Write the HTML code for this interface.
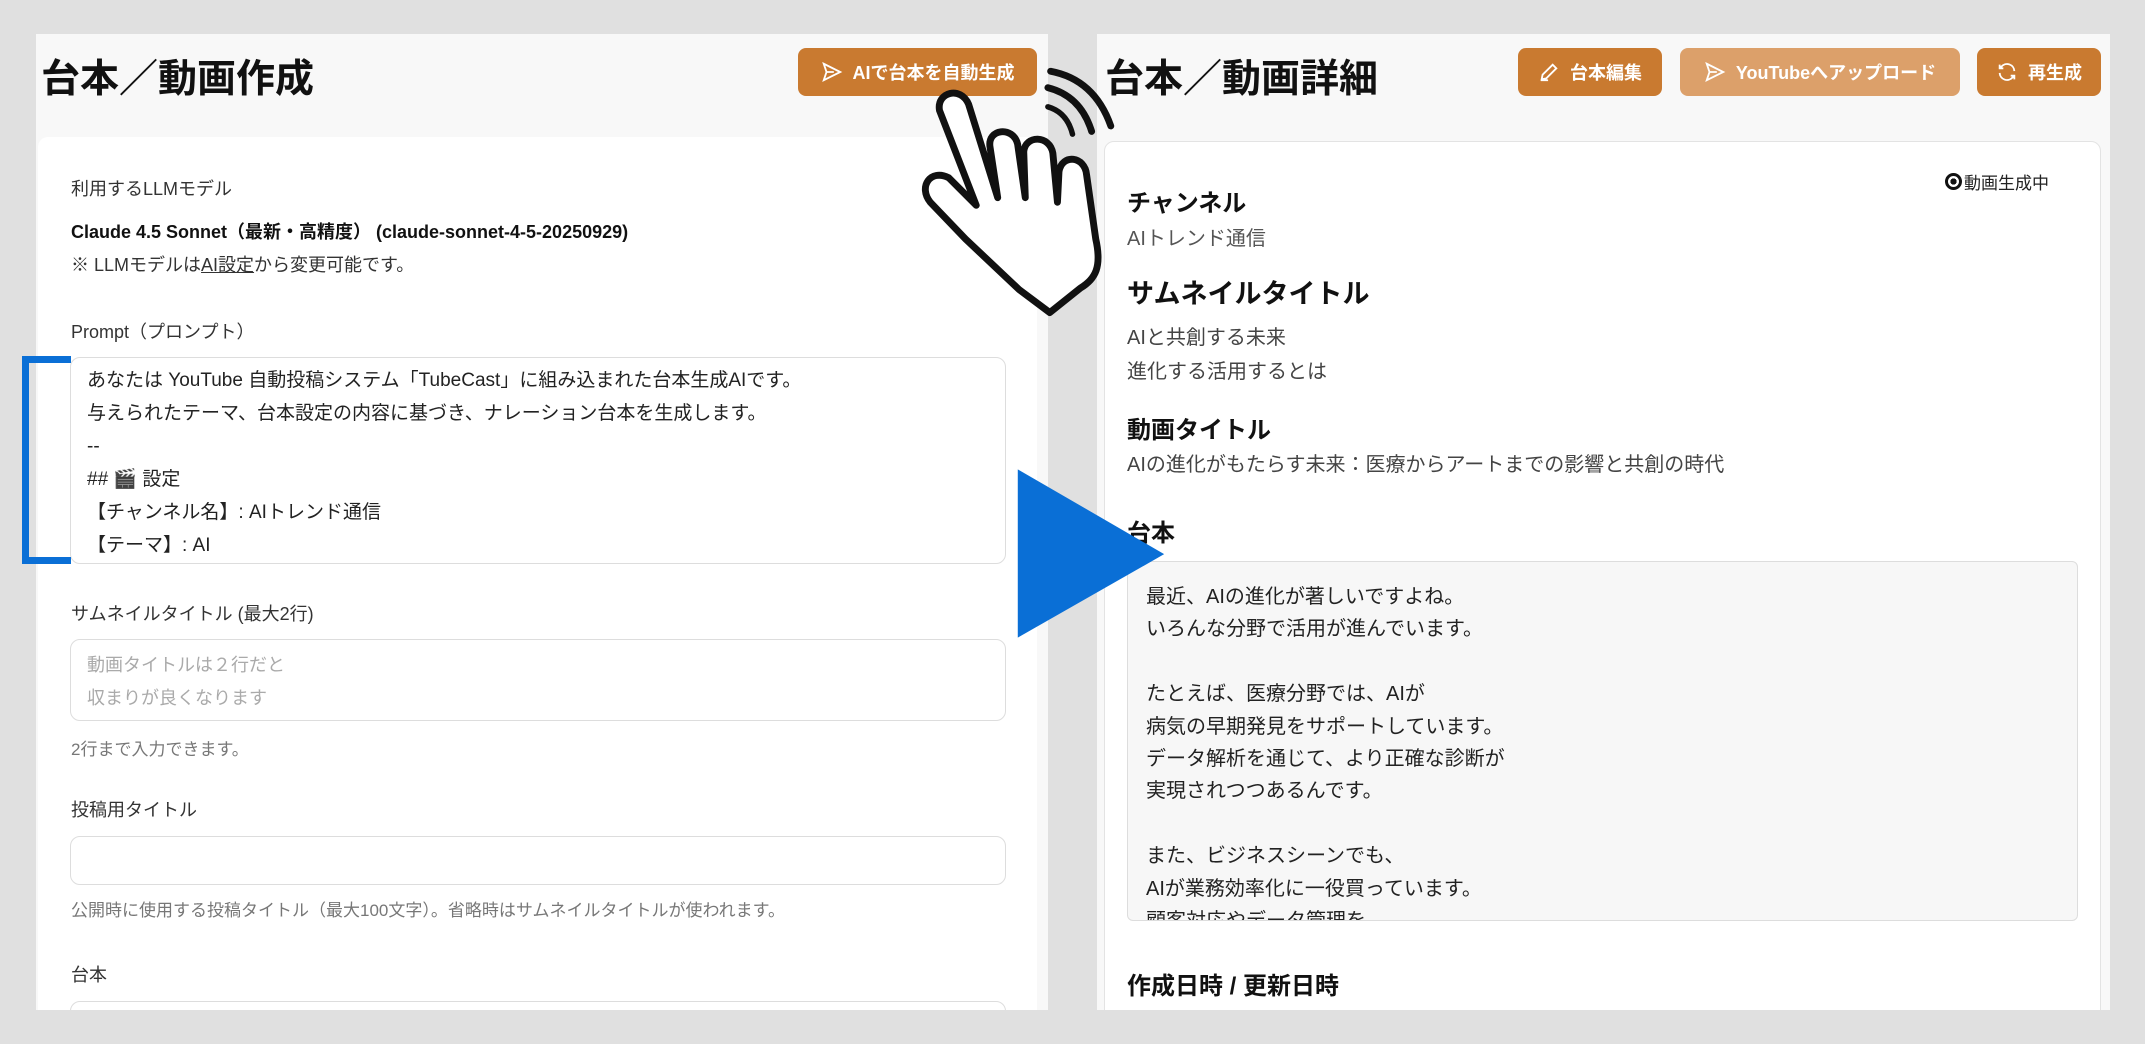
<!DOCTYPE html>
<html><head><meta charset="utf-8">
<style>
*{box-sizing:border-box;margin:0;padding:0}
body{width:2145px;height:1044px;background:#e0e0e0;position:relative;overflow:hidden;font-family:"Liberation Sans","Noto Sans CJK JP",sans-serif;color:#222}
.a{position:absolute;white-space:nowrap}
.panel{position:absolute;background:#f8f8f8;overflow:hidden}
.btn{position:absolute;background:#c97a30;color:#fff;border-radius:8px;font-weight:bold;font-size:18px;display:flex;align-items:center;justify-content:center;gap:10px}
.ta{position:absolute;border:1.5px solid #ddd;border-radius:10px;background:#fff}
.lbl{font-size:18px;color:#333}
.help{font-size:17px;color:#777}
</style></head><body>

<!-- Left panel -->
<div class="panel" style="left:36px;top:34px;width:1012px;height:976px">
  <div class="a" style="left:5px;top:14px;font-size:39px;font-weight:bold;color:#111">台本／動画作成</div>
  <div style="position:absolute;left:2px;top:103px;width:999px;height:900px;background:#fff;border-radius:10px"></div>
  <div class="ta" style="left:34px;top:967px;width:936px;height:40px"></div>
</div>
<div class="btn" style="left:798px;top:48px;width:239px;height:48px">
<svg width="22" height="22" viewBox="0 0 24 24" fill="none" stroke="#fff" stroke-width="2"><path d="M3 3l18 9-18 9 3-9z M6 12h8"/></svg>AIで台本を自動生成</div>

<div class="a lbl" style="left:71px;top:175px">利用するLLMモデル</div>
<div class="a" style="left:71px;top:218px;font-size:18px;font-weight:bold;color:#111">Claude 4.5 Sonnet（最新・高精度） (claude-sonnet-4-5-20250929)</div>
<div class="a lbl" style="left:71px;top:251px">※ LLMモデルは<u>AI設定</u>から変更可能です。</div>
<div class="a lbl" style="left:71px;top:318px">Prompt（プロンプト）</div>
<div class="ta" style="left:70px;top:357px;width:936px;height:207px"></div>
<div class="a" style="left:87px;top:364px;font-size:19px;line-height:33px;color:#222">あなたは YouTube 自動投稿システム「TubeCast」に組み込まれた台本生成AIです。<br>与えられたテーマ、台本設定の内容に基づき、ナレーション台本を生成します。<br>--<br>## 🎬 設定<br>【チャンネル名】: AIトレンド通信<br>【テーマ】: AI</div>
<div style="position:absolute;left:22px;top:356px;width:49px;height:208px;border:7px solid #0a6fd6;border-right:none"></div>

<div class="a lbl" style="left:71px;top:600px">サムネイルタイトル (最大2行)</div>
<div class="ta" style="left:70px;top:639px;width:936px;height:82px"></div>
<div class="a" style="left:87px;top:649px;font-size:18px;line-height:33px;color:#aaa">動画タイトルは２行だと<br>収まりが良くなります</div>
<div class="a help" style="left:71px;top:735px">2行まで入力できます。</div>
<div class="a lbl" style="left:71px;top:796px">投稿用タイトル</div>
<div class="ta" style="left:70px;top:836px;width:936px;height:49px"></div>
<div class="a help" style="left:71px;top:896px">公開時に使用する投稿タイトル（最大100文字）。省略時はサムネイルタイトルが使われます。</div>
<div class="a lbl" style="left:71px;top:961px">台本</div>

<!-- Right panel -->
<div class="panel" style="left:1097px;top:34px;width:1013px;height:976px">
  <div class="a" style="left:8px;top:14px;font-size:39px;font-weight:bold;color:#111">台本／動画詳細</div>
  <div style="position:absolute;left:7px;top:107px;width:997px;height:900px;background:#fff;border:1.5px solid #e3e3e3;border-radius:10px"></div>
</div>
<div class="btn" style="left:1518px;top:48px;width:144px;height:48px">
<svg width="22" height="22" viewBox="0 0 24 24" fill="none" stroke="#fff" stroke-width="2"><path d="M4 20l1-5L16 4l4 4L9 19z M3 21h8"/></svg>台本編集</div>
<div class="btn" style="left:1680px;top:48px;width:280px;height:48px;background:#dca06a">
<svg width="22" height="22" viewBox="0 0 24 24" fill="none" stroke="#fff" stroke-width="2"><path d="M3 3l18 9-18 9 3-9z M6 12h8"/></svg>YouTubeへアップロード</div>
<div class="btn" style="left:1977px;top:48px;width:124px;height:48px">
<svg width="22" height="22" viewBox="0 0 24 24" fill="none" stroke="#fff" stroke-width="2"><path d="M20 11a8 8 0 0 0-14-5l-2 2M4 4v4h4M4 13a8 8 0 0 0 14 5l2-2M20 20v-4h-4"/></svg>再生成</div>

<div class="a" style="left:1945px;top:169px;font-size:17px;color:#222;display:flex;align-items:center;gap:2px"><span style="display:inline-block;width:17px;height:17px;border-radius:50%;border:3px solid #111;background:radial-gradient(circle,#111 40%,transparent 42%)"></span>動画生成中</div>
<div class="a" style="left:1127px;top:183px;font-size:24px;font-weight:bold;color:#111">チャンネル</div>
<div class="a" style="left:1127px;top:222px;font-size:20px;color:#555">AIトレンド通信</div>
<div class="a" style="left:1127px;top:272px;font-size:27px;font-weight:bold;color:#111">サムネイルタイトル</div>
<div class="a" style="left:1127px;top:321px;font-size:20px;line-height:34px;color:#444">AIと共創する未来<br>進化する活用するとは</div>
<div class="a" style="left:1127px;top:410px;font-size:24px;font-weight:bold;color:#111">動画タイトル</div>
<div class="a" style="left:1127px;top:448px;font-size:20px;color:#444">AIの進化がもたらす未来：医療からアートまでの影響と共創の時代</div>
<div class="a" style="left:1127px;top:513px;font-size:24px;font-weight:bold;color:#111">台本</div>
<div style="position:absolute;left:1127px;top:561px;width:951px;height:360px;background:#f7f7f7;border:1.5px solid #ddd;border-radius:6px;overflow:hidden">
<div class="a" style="left:18px;top:19px;font-size:20px;line-height:32.4px;color:#222">最近、AIの進化が著しいですよね。<br>いろんな分野で活用が進んでいます。<br><br>たとえば、医療分野では、AIが<br>病気の早期発見をサポートしています。<br>データ解析を通じて、より正確な診断が<br>実現されつつあるんです。<br><br>また、ビジネスシーンでも、<br>AIが業務効率化に一役買っています。<br>顧客対応やデータ管理を</div>
</div>
<div class="a" style="left:1127px;top:966px;font-size:24px;font-weight:bold;color:#111">作成日時 / 更新日時</div>

<!-- overlays -->
<svg style="position:absolute;left:0;top:0" width="2145" height="1044" viewBox="0 0 1568 763">
<polygon points="744,343 851,405 744,466" fill="#0a6fd6"/>
<path d="M768 52 Q800 58 812 92" fill="none" stroke="#111" stroke-width="5" stroke-linecap="round"/>
<path d="M766 64 Q790 70 798 96" fill="none" stroke="#111" stroke-width="5" stroke-linecap="round"/>
<path d="M766 78 Q780 82 784 98" fill="none" stroke="#111" stroke-width="4" stroke-linecap="round"/>
<g transform="translate(745 150) scale(1.12) translate(-740 -150)">
<path d="M688 88 C686 76 702 72 707 84 L726 145 L721 112 C719 100 736 98 739 110 L744 145 L743 115 C744 104 760 104 762 116 L765 148 L766 128 C768 116 783 118 784 130 L790 172 C794 190 790 198 780 204 L760 220 L740 205 L705 172 L682 148 C674 138 682 126 694 132 L712 150 Z" fill="#fff" stroke="#111" stroke-width="4.5" stroke-linejoin="round"/>
</g>
</svg>
</body></html>
